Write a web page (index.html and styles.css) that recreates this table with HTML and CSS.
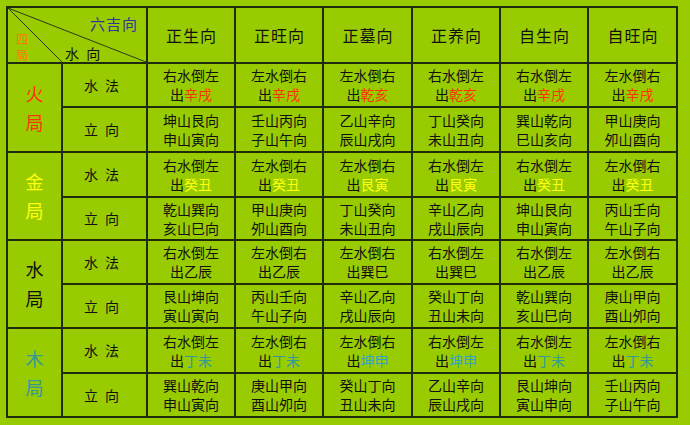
FILE: index.html
```html
<!DOCTYPE html>
<html lang="zh">
<head>
<meta charset="utf-8">
<link rel="stylesheet" href="styles.css">
</head>
<body>
<div class="table">
  <div class="cell diag">
    <svg class="diag-lines" width="138" height="54" viewBox="0 0 138 54">
      <line x1="0" y1="0" x2="54" y2="54" />
      <line x1="0" y1="0" x2="138" y2="54" />
    </svg>
    <span class="lbl-six">六吉向</span>
    <span class="lbl-water">水 向</span>
    <span class="lbl-four">四<br>局</span>
  </div>
  <div class="cell head">正生向</div>
  <div class="cell head">正旺向</div>
  <div class="cell head">正墓向</div>
  <div class="cell head">正养向</div>
  <div class="cell head">自生向</div>
  <div class="cell head">自旺向</div>

  <div class="cell ju fire">火<br>局</div>
  <div class="cell kind">水 法</div>
  <div class="cell"><span>右水倒左</span><span>出<em class="fire">辛戌</em></span></div>
  <div class="cell"><span>左水倒右</span><span>出<em class="fire">辛戌</em></span></div>
  <div class="cell"><span>左水倒右</span><span>出<em class="fire">乾亥</em></span></div>
  <div class="cell"><span>右水倒左</span><span>出<em class="fire">乾亥</em></span></div>
  <div class="cell"><span>右水倒左</span><span>出<em class="fire">辛戌</em></span></div>
  <div class="cell"><span>左水倒右</span><span>出<em class="fire">辛戌</em></span></div>
  <div class="cell kind">立 向</div>
  <div class="cell"><span>坤山艮向</span><span>申山寅向</span></div>
  <div class="cell"><span>壬山丙向</span><span>子山午向</span></div>
  <div class="cell"><span>乙山辛向</span><span>辰山戌向</span></div>
  <div class="cell"><span>丁山癸向</span><span>未山丑向</span></div>
  <div class="cell"><span>巽山乾向</span><span>巳山亥向</span></div>
  <div class="cell"><span>甲山庚向</span><span>夘山酉向</span></div>

  <div class="cell ju metal">金<br>局</div>
  <div class="cell kind">水 法</div>
  <div class="cell"><span>右水倒左</span><span>出<em class="metal">癸丑</em></span></div>
  <div class="cell"><span>左水倒右</span><span>出<em class="metal">癸丑</em></span></div>
  <div class="cell"><span>左水倒右</span><span>出<em class="metal">艮寅</em></span></div>
  <div class="cell"><span>右水倒左</span><span>出<em class="metal">艮寅</em></span></div>
  <div class="cell"><span>右水倒左</span><span>出<em class="metal">癸丑</em></span></div>
  <div class="cell"><span>左水倒右</span><span>出<em class="metal">癸丑</em></span></div>
  <div class="cell kind">立 向</div>
  <div class="cell"><span>乾山巽向</span><span>亥山巳向</span></div>
  <div class="cell"><span>甲山庚向</span><span>夘山酉向</span></div>
  <div class="cell"><span>丁山癸向</span><span>未山丑向</span></div>
  <div class="cell"><span>辛山乙向</span><span>戌山辰向</span></div>
  <div class="cell"><span>坤山艮向</span><span>申山寅向</span></div>
  <div class="cell"><span>丙山壬向</span><span>午山子向</span></div>

  <div class="cell ju water">水<br>局</div>
  <div class="cell kind">水 法</div>
  <div class="cell"><span>右水倒左</span><span>出乙辰</span></div>
  <div class="cell"><span>左水倒右</span><span>出乙辰</span></div>
  <div class="cell"><span>左水倒右</span><span>出巽巳</span></div>
  <div class="cell"><span>右水倒左</span><span>出巽巳</span></div>
  <div class="cell"><span>右水倒左</span><span>出乙辰</span></div>
  <div class="cell"><span>左水倒右</span><span>出乙辰</span></div>
  <div class="cell kind">立 向</div>
  <div class="cell"><span>艮山坤向</span><span>寅山寅向</span></div>
  <div class="cell"><span>丙山壬向</span><span>午山子向</span></div>
  <div class="cell"><span>辛山乙向</span><span>戌山辰向</span></div>
  <div class="cell"><span>癸山丁向</span><span>丑山未向</span></div>
  <div class="cell"><span>乾山巽向</span><span>亥山巳向</span></div>
  <div class="cell"><span>庚山甲向</span><span>酉山夘向</span></div>

  <div class="cell ju wood">木<br>局</div>
  <div class="cell kind">水 法</div>
  <div class="cell"><span>右水倒左</span><span>出<em class="wood">丁未</em></span></div>
  <div class="cell"><span>左水倒右</span><span>出<em class="wood">丁未</em></span></div>
  <div class="cell"><span>左水倒右</span><span>出<em class="wood2">坤申</em></span></div>
  <div class="cell"><span>右水倒左</span><span>出<em class="wood2">坤申</em></span></div>
  <div class="cell"><span>右水倒左</span><span>出<em class="wood">丁未</em></span></div>
  <div class="cell"><span>左水倒右</span><span>出<em class="wood">丁未</em></span></div>
  <div class="cell kind">立 向</div>
  <div class="cell"><span>巽山乾向</span><span>申山寅向</span></div>
  <div class="cell"><span>庚山甲向</span><span>酉山夘向</span></div>
  <div class="cell"><span>癸山丁向</span><span>丑山未向</span></div>
  <div class="cell"><span>乙山辛向</span><span>辰山戌向</span></div>
  <div class="cell"><span>艮山坤向</span><span>寅山申向</span></div>
  <div class="cell"><span>壬山丙向</span><span>子山午向</span></div>
</div>
</body>
</html>
```
FILE: styles.css
```css
html, body {
  margin: 0;
  padding: 0;
  background: #99cc00;
}

body {
  font-family: "Noto Sans CJK SC", "Noto Sans", sans-serif;
  color: #111;
}

.table {
  display: grid;
  grid-template-columns: 53px 83px 86px 86px 87px 86px 86px 87px;
  grid-template-rows: 54px 42px 43px 43px 41px 42px 42px 43px 42px;
  gap: 2px;
  padding: 2px;
  background: #1f2c0c;
  width: max-content;
  margin: 6px 0 0 6px;
}

.cell {
  background: #99cc00;
  display: flex;
  flex-direction: column;
  align-items: center;
  justify-content: center;
  font-size: 14px;
  line-height: 19px;
  text-align: center;
}

.cell em {
  font-style: normal;
}

.head {
  font-size: 16px;
  line-height: 20px;
  letter-spacing: 1px;
  padding-left: 1px;
}

.kind {
  font-size: 14px;
  word-spacing: 4px;
  padding-right: 6px;
}

.ju {
  grid-row: span 2;
  display: block;
  font-size: 18px;
  line-height: 29px;
  align-content: center;
}

.diag {
  grid-column: span 2;
  position: relative;
  display: block;
}

.diag-lines {
  position: absolute;
  left: 0;
  top: 0;
}

.diag-lines line {
  stroke: #2c3a14;
  stroke-width: 1;
}

.lbl-six {
  position: absolute;
  left: 82px;
  top: 7px;
  font-size: 15px;
  line-height: 18px;
  letter-spacing: 1px;
  color: #333399;
}

.lbl-water {
  position: absolute;
  left: 57px;
  top: 36px;
  font-size: 14px;
  line-height: 18px;
  word-spacing: 4px;
}

.lbl-four {
  position: absolute;
  left: 8px;
  top: 23px;
  font-size: 12px;
  line-height: 16px;
  color: #ff7711;
}

.fire { color: #ff3300; }
.metal { color: #ffff11; }
.water { color: #111; }
.wood { color: #339999; }
.wood2 { color: #33a3c4; }
```
